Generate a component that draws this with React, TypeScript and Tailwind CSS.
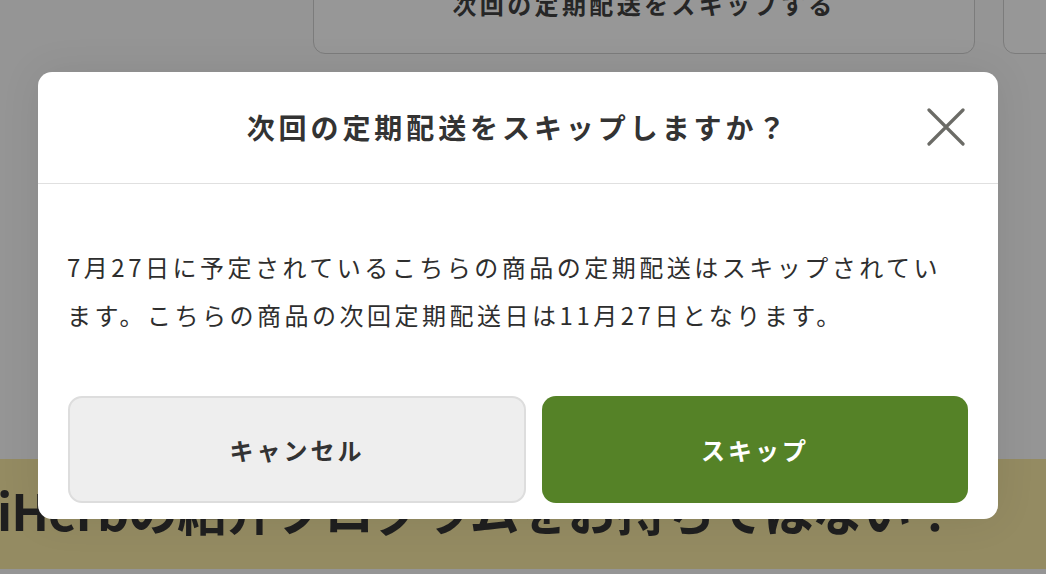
import React from "react";

const jp = { fontFamily: '"Noto Sans CJK JP", "Noto Sans", sans-serif' };

function CloseIcon() {
  return (
    <svg width="38" height="38" viewBox="0 0 38 38" fill="none">
      <path d="M2 2 L36 36 M36 2 L2 36" stroke="#6b6b66" strokeWidth="3.2" strokeLinecap="round" />
    </svg>
  );
}

export default function App() {
  return (
    <div
      className="relative w-[1046px] h-[574px] overflow-hidden bg-[#959595] text-[#333333]"
      style={jp}
    >
      {/* page behind the overlay */}
      <div className="flex flex-col h-full">
        <div className="flex mt-[-46px] h-[100px] shrink-0">
          <div className="shrink-0 ml-[313px] w-[662px] h-full rounded-[12px] border border-[#7c7c7c] bg-[#979797] flex justify-center pt-[33px]">
            <span className="text-[24px] leading-[32px] font-bold tracking-[0.14em] text-[#262626]">
              次回の定期配送をスキップする
            </span>
          </div>
          <div className="shrink-0 ml-[28px] w-[200px] h-full rounded-[12px] border border-[#7c7c7c] bg-[#979797]" />
        </div>
        <div className="shrink-0 mt-[405px] h-[110px] bg-[#948b62] flex items-center ml-[-3px] pb-[10px] whitespace-nowrap">
          <span className="text-[50px] leading-[58px] font-bold tracking-[-1px] text-[#1f1f1f]">
            iHerbの紹介プログラムをお持ちではない？
          </span>
        </div>
      </div>

      {/* dialog */}
      <div className="absolute left-[38px] top-[72px] w-[960px] h-[447px] rounded-[14px] bg-white shadow-[0_0_40px_rgba(0,0,0,0.08)] flex flex-col">
        <div className="relative h-[112px] shrink-0 flex items-center justify-center border-b border-[#e0e0e0]">
          <h2 className="text-[28px] leading-[36px] font-bold tracking-[0.14em] pb-[2px]">
            次回の定期配送をスキップしますか？
          </h2>
          <button className="absolute right-[33px] top-[36px]">
            <CloseIcon />
          </button>
        </div>
        <div className="pl-[29px] pr-[40px] pt-[59px]">
          <p className="text-[24px] leading-[48px] tracking-[3.5px] text-[#2e2e2e]">
            7月27日に予定されているこちらの商品の定期配送はスキップされています。こちらの商品の次回定期配送日は11月27日となります。
          </p>
        </div>
        <div className="flex gap-[16px] px-[30px] mt-[57px]">
          <button className="w-[458px] h-[107px] rounded-[14px] bg-[#eeeeee] border-2 border-[#dddddd] text-[24px] leading-[32px] font-bold tracking-[3px] text-[#333333]">
            キャンセル
          </button>
          <button className="flex-1 h-[107px] rounded-[14px] bg-[#558227] text-[24px] leading-[32px] font-bold tracking-[3px] text-white">
            スキップ
          </button>
        </div>
      </div>
    </div>
  );
}
